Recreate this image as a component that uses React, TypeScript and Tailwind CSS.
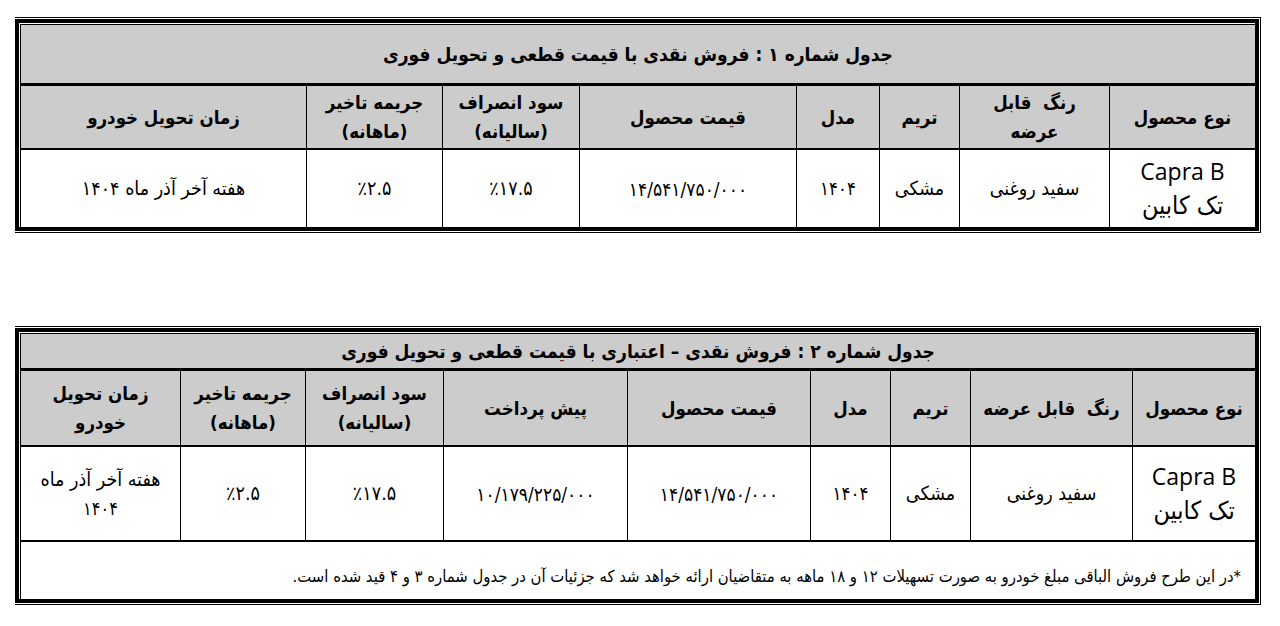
import React from 'react';

type CellProps = {
  children?: React.ReactNode;
  last?: boolean;
  className?: string;
};

const Cell = ({ children, last, className = '' }: CellProps) => (
  <div
    className={`flex flex-col items-center justify-center text-center ${last ? '' : 'border-l border-black'} ${className}`}
  >
    {children}
  </div>
);

// Word-style "thin-thick" double frame around each table
const Frame = ({ children }: { children: React.ReactNode }) => (
  <div className="w-[1246px] border-t border-r border-b border-black bg-white pt-px pr-px pb-px">
    <div className="border-[4px] border-black">
      <div className="pt-px pl-px">
        <div className="border-t border-l border-black">{children}</div>
      </div>
    </div>
  </div>
);

const head = 'text-[18.5px] font-bold leading-[29px] text-black';
const body = 'text-[17.5px] leading-[30px] text-black';
const words = 'text-[19.5px]';
const price = 'text-[19px]';
const pct = 'text-[19.5px] tracking-[2px]';

const ProductCell = ({ last }: { last?: boolean }) => (
  <Cell last={last}>
    <span className="font-['Open_Sans',sans-serif] text-[23px] leading-[34px]" dir="ltr">
      Capra B
    </span>
    <span className="text-[25px] leading-[36px]">تک کابین</span>
  </Cell>
);

function TableOne() {
  const cols = 'grid grid-cols-[146px_150px_80px_83px_217px_137px_136px_285px]';
  return (
    <Frame>
      <div className="flex h-[61px] items-center justify-center border-b-[3px] border-black bg-[#cccccc]">
        <span className="text-[19px] font-bold text-black">
          جدول شماره ۱ : فروش نقدی با قیمت قطعی و تحویل فوری
        </span>
      </div>
      <div className={`${cols} h-[64px] border-b-2 border-black bg-[#cccccc] ${head}`}>
        <Cell>نوع محصول</Cell>
        <Cell>
          <span>رنگ&nbsp; قابل</span>
          <span>عرضه</span>
        </Cell>
        <Cell>تریم</Cell>
        <Cell>مدل</Cell>
        <Cell>قیمت محصول</Cell>
        <Cell>
          <span>سود انصراف</span>
          <span>(سالیانه)</span>
        </Cell>
        <Cell>
          <span>جریمه تاخیر</span>
          <span>(ماهانه)</span>
        </Cell>
        <Cell last>زمان تحویل خودرو</Cell>
      </div>
      <div className={`${cols} h-[77px] ${body}`}>
        <ProductCell />
        <Cell className={words}>سفید روغنی</Cell>
        <Cell className={words}>مشکی</Cell>
        <Cell className="text-[18.5px]">۱۴۰۴</Cell>
        <Cell className={price}>۱۴/۵۴۱/۷۵۰/۰۰۰</Cell>
        <Cell className={pct}>٪۱۷.۵</Cell>
        <Cell className={pct}>٪۲.۵</Cell>
        <Cell last className={words}>
          هفته آخر آذر ماه ۱۴۰۴
        </Cell>
      </div>
    </Frame>
  );
}

function TableTwo() {
  const cols = 'grid grid-cols-[123px_162px_80px_80px_183px_184px_138px_125px_159px]';
  return (
    <Frame>
      <div className="flex h-[37px] items-center justify-center border-b-[3px] border-black bg-[#cccccc]">
        <span className="text-[19px] font-bold text-black">
          جدول شماره ۲ : فروش نقدی – اعتباری با قیمت قطعی و تحویل فوری
        </span>
      </div>
      <div className={`${cols} h-[76px] border-b-2 border-black bg-[#cccccc] ${head}`}>
        <Cell>نوع محصول</Cell>
        <Cell>رنگ&nbsp; قابل عرضه</Cell>
        <Cell>تریم</Cell>
        <Cell>مدل</Cell>
        <Cell>قیمت محصول</Cell>
        <Cell>پیش پرداخت</Cell>
        <Cell>
          <span>سود انصراف</span>
          <span>(سالیانه)</span>
        </Cell>
        <Cell>
          <span>جریمه تاخیر</span>
          <span>(ماهانه)</span>
        </Cell>
        <Cell last>
          <span>زمان تحویل</span>
          <span>خودرو</span>
        </Cell>
      </div>
      <div className={`${cols} h-[95px] border-b-2 border-black ${body}`}>
        <ProductCell />
        <Cell className={words}>سفید روغنی</Cell>
        <Cell className={words}>مشکی</Cell>
        <Cell className="text-[18.5px]">۱۴۰۴</Cell>
        <Cell className={price}>۱۴/۵۴۱/۷۵۰/۰۰۰</Cell>
        <Cell className={`${price} tracking-[1px]`}>۱۰/۱۷۹/۲۲۵/۰۰۰</Cell>
        <Cell className={pct}>٪۱۷.۵</Cell>
        <Cell className={pct}>٪۲.۵</Cell>
        <Cell last className={`${words} leading-[29px]`}>
          <span>هفته آخر آذر ماه</span>
          <span className="text-[18px]">۱۴۰۴</span>
        </Cell>
      </div>
      <div className="flex h-[57px] items-center pt-[14px] pr-[14px] text-[16.5px] text-black">
        *در این طرح فروش الباقی مبلغ خودرو به صورت تسهیلات ۱۲ و ۱۸ ماهه به متقاضیان ارائه خواهد شد که
        جزئیات آن در جدول شماره ۳ و ۴ قید شده است.
      </div>
    </Frame>
  );
}

export default function App() {
  return (
    <div
      dir="rtl"
      className="h-[626px] w-[1280px] overflow-hidden bg-white font-['DejaVu_Sans_Condensed','DejaVu_Sans',sans-serif]"
    >
      <div className="flex flex-col items-start pt-[17px] pl-[15px]" dir="ltr">
        <div dir="rtl">
          <TableOne />
        </div>
        <div dir="rtl" className="mt-[93px]">
          <TableTwo />
        </div>
      </div>
    </div>
  );
}
